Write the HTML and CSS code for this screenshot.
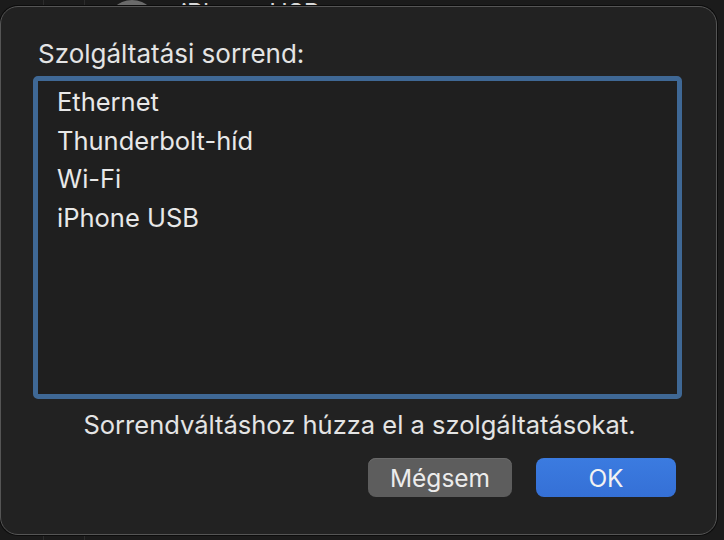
FILE: index.html
```html
<!DOCTYPE html>
<html lang="hu">
<head>
<meta charset="utf-8">
<link rel="stylesheet" href="styles.css">
</head>
<body>
<div class="behind">
  <span class="sep sep-a"></span>
  <span class="sep sep-b"></span>
  <span class="avatar"></span>
  <span class="behind-label">iPhone USB</span>
</div>
<div class="dialog">
  <div class="title">Szolgáltatási sorrend:</div>
  <div class="listbox">
    <div class="item">Ethernet</div>
    <div class="item">Thunderbolt-híd</div>
    <div class="item">Wi-Fi</div>
    <div class="item">iPhone USB</div>
  </div>
  <div class="hint">Sorrendváltáshoz húzza el a szolgáltatásokat.</div>
  <div class="buttons">
    <button class="btn btn-cancel">Mégsem</button>
    <button class="btn btn-ok">OK</button>
  </div>
</div>
</body>
</html>
```
FILE: styles.css
```css
html, body {
  margin: 0;
  padding: 0;
  background: #1b1b1b;
  width: 724px;
  height: 540px;
  overflow: hidden;
  font-family: "Inter", "Liberation Sans", sans-serif;
  color: #e6e6e6;
}
body { position: relative; }

.behind {
  position: absolute;
  left: 0;
  top: 0;
  width: 724px;
  height: 540px;
  z-index: 0;
}
.sep {
  position: absolute;
  top: 0;
  width: 1px;
  height: 540px;
  background: #2c2c2c;
}
.sep-a { left: 43px; }
.sep-b { left: 84px; }
.avatar {
  position: absolute;
  left: 106px;
  top: 0;
  width: 52px;
  height: 52px;
  border-radius: 50%;
  background: #6a6a6a;
}
.behind-label {
  position: absolute;
  left: 181px;
  top: 1px;
  font-size: 25px;
  line-height: 25px;
  color: #d8d8d8;
}

.dialog {
  position: relative;
  z-index: 1;
  margin-top: 6px;
  width: 717px;
  height: 529px;
  box-sizing: border-box;
  background: #222222;
  border: 1px solid #555555;
  border-radius: 18px;
  box-shadow: 0 0 0 1px #0c0c0c;
  padding: 32px 34px 0 32px;
  display: flex;
  flex-direction: column;
}
.title {
  font-size: 26px;
  line-height: 30px;
  padding-left: 5px;
  color: #e4e4e4;
}
.listbox {
  margin-top: 7px;
  height: 323px;
  box-sizing: border-box;
  border: 5px solid #3f6895;
  border-radius: 5px;
  background: #1f1f1f;
  padding: 2px 0 0 19px;
  display: flex;
  flex-direction: column;
}
.item {
  font-size: 25.5px;
  line-height: 38.7px;
  height: 38.7px;
  color: #e8e8e8;
}
.hint {
  margin-top: 11px;
  text-align: center;
  font-size: 25.5px;
  line-height: 30px;
  color: #e4e4e4;
  padding-left: 4px;
}
.buttons {
  margin-top: 18px;
  display: flex;
  justify-content: flex-end;
  gap: 24px;
  padding-right: 6px;
}
.btn {
  height: 39px;
  border: none;
  border-radius: 8px;
  font-family: inherit;
  font-size: 24.5px;
  color: #ececec;
  padding: 0;
}
.btn-cancel {
  width: 144px;
  background: #5d5d5d;
  box-shadow: inset 0 1px 0 #6a6a6a;
}
.btn-ok {
  width: 140px;
  background: linear-gradient(#3b7be0, #3570d6);
  color: #f2f2f2;
}
```
